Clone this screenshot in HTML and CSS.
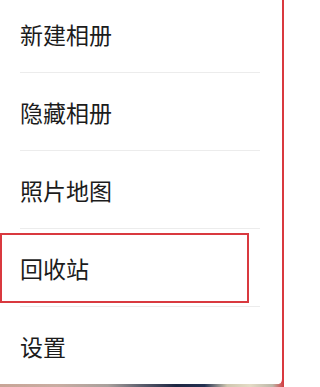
FILE: index.html
```html
<!DOCTYPE html>
<html lang="zh-CN">
<head>
<meta charset="utf-8">
<link rel="stylesheet" href="styles.css">
</head>
<body>
<div class="frame">
  <div class="menu">
    <ul class="list">
      <li class="item">新建相册</li>
      <li class="item">隐藏相册</li>
      <li class="item">照片地图</li>
      <li class="item item-marked">回收站<span class="mark"></span></li>
      <li class="item item-last">设置</li>
    </ul>
  </div>
</div>
</body>
</html>
```
FILE: styles.css
```css
html, body {
  margin: 0;
  padding: 0;
  background: #ffffff;
}
body {
  width: 296px;
  height: 387px;
  overflow: hidden;
  font-family: "Noto Sans CJK SC", "Noto Sans", sans-serif;
}
.frame {
  width: 284px;
  height: 387px;
  background: linear-gradient(to right, #c8a597 0%, #c9ada2 20%, #a8a09c 38%, #5a5d6c 50%, #1d2642 62%, #243151 72%, #cfc7b0 80%, #e4dcc6 88%, #bdb7a8 96%, #d23a40 100%);
}
.menu {
  height: 384px;
  width: 282px;
  background: #ffffff;
  border-right: 2px solid #d9393f;
  border-bottom-right-radius: 5px;
  overflow: hidden;
}
.list {
  list-style: none;
  margin: -5px 0 0 0;
  padding: 0;
}
.item {
  position: relative;
  display: flex;
  align-items: center;
  height: 77px;
  margin: 0 22px 0 20px;
  border-bottom: 1px solid #ececec;
  font-size: 23px;
  color: #1c1c1c;
  letter-spacing: 0;
}
.item-last {
  border-bottom: none;
}
.mark {
  position: absolute;
  left: -20px;
  top: 4px;
  width: 245px;
  height: 66px;
  border: 2px solid #d9393f;
}
```
